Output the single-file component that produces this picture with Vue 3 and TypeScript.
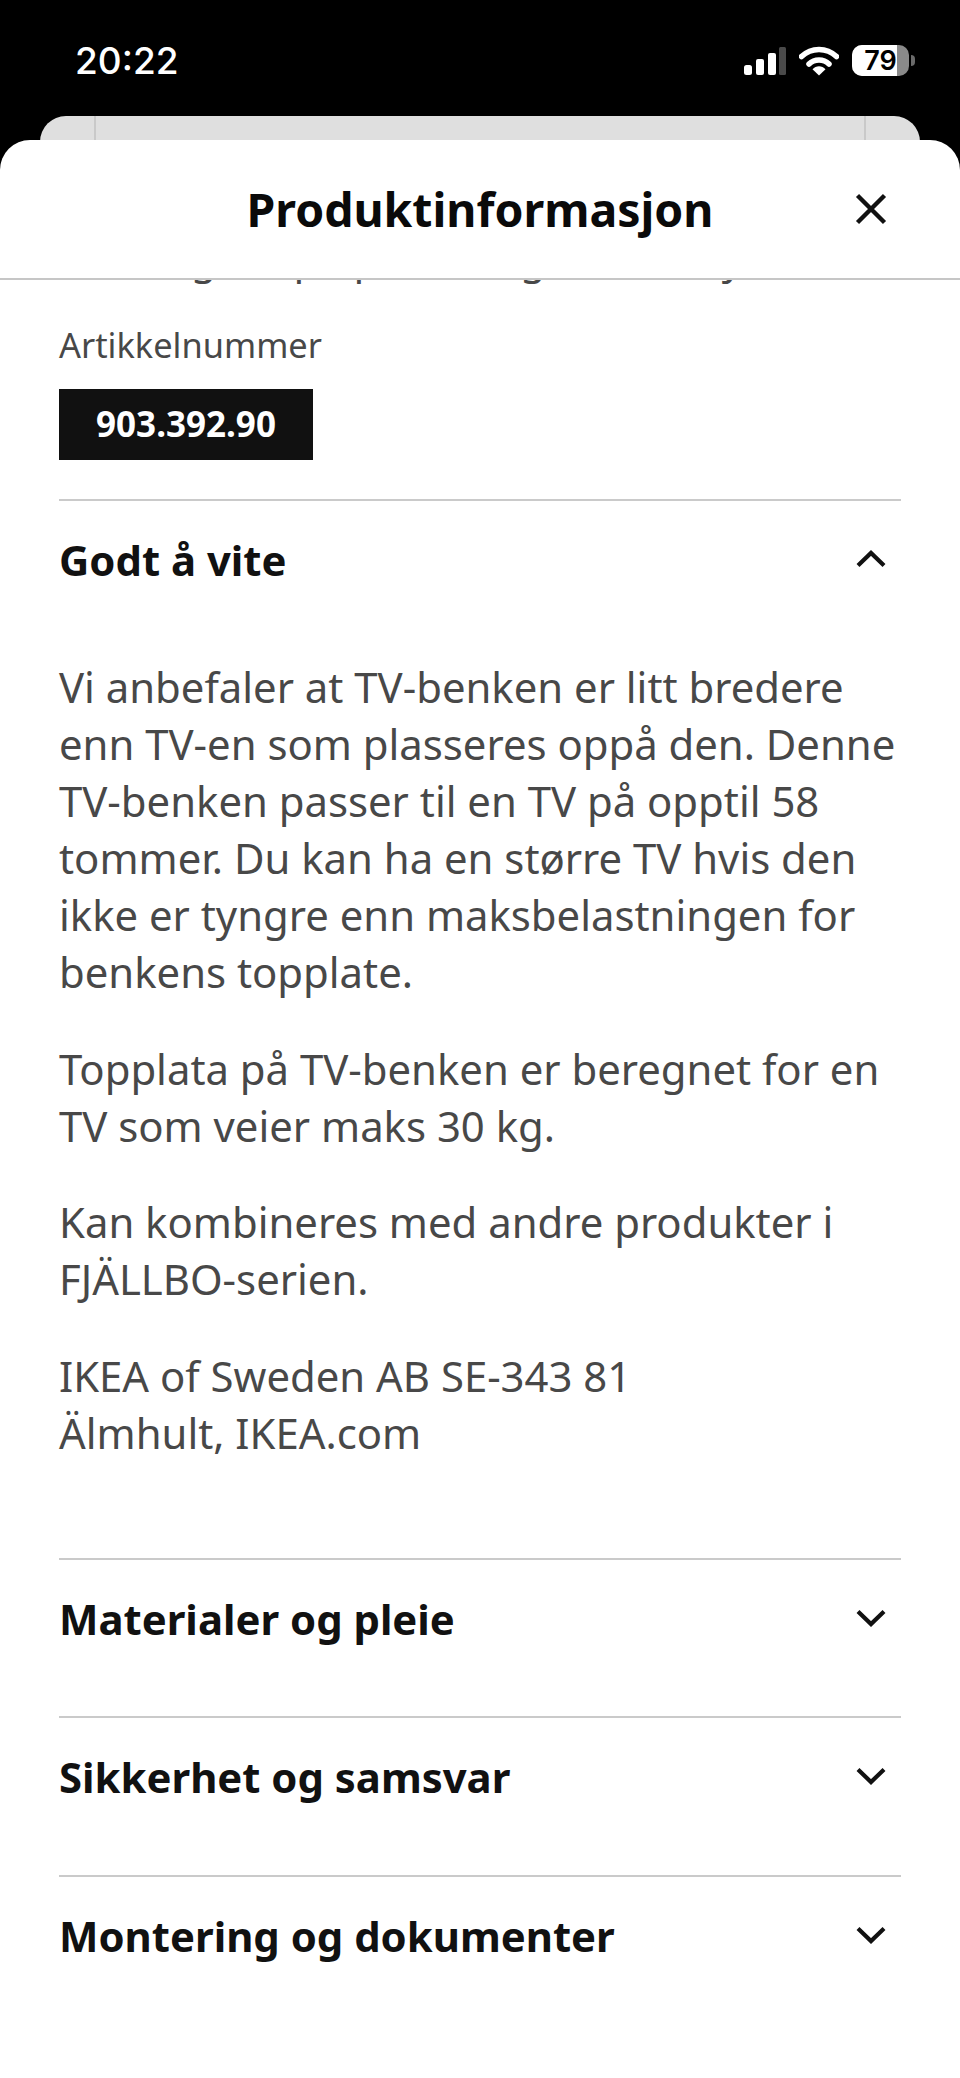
<template>
  <div class="phone">
    <!-- statuslinje -->
    <div class="status-bar">
      <span class="clock">20:22</span>
      <div class="status-icons">
        <svg class="signal" width="42" height="28" viewBox="0 0 42 28">
          <rect x="0" y="18" width="8" height="10" rx="2.5" fill="#fff" />
          <rect x="12" y="12" width="8" height="16" rx="2" fill="#fff" />
          <rect x="24" y="6" width="8" height="22" rx="2" fill="#fff" />
          <rect x="35" y="0" width="7" height="28" rx="1.5" fill="#4a4a4a" />
        </svg>
        <svg class="wifi" width="40" height="30" viewBox="0 0 40 30">
          <path d="M2.5 10.5C12.5 1 27.5 1 37.5 10.5" fill="none" stroke="#fff" stroke-width="5.5" stroke-linecap="round" />
          <path d="M10 18C15.5 12.5 24.5 12.5 30 18" fill="none" stroke="#fff" stroke-width="5.5" stroke-linecap="round" />
          <path d="M13.5 23.2C17 19.2 23 19.2 26.5 23.2L20 29.5Z" fill="#fff" />
        </svg>
        <div class="battery">
          <div class="battery-body">
            <div class="battery-fill" :style="{ width: batteryLevel + '%' }"></div>
            <span class="battery-text">{{ batteryText }}</span>
          </div>
          <div class="battery-nub"></div>
        </div>
      </div>
    </div>

    <!-- kortet bak arket -->
    <div class="back-card">
      <div class="back-card-inner"></div>
    </div>

    <div class="sheet">
      <div class="sheet-header">
        <h1 class="sheet-title">Produktinformasjon</h1>
        <svg class="close-icon" width="32" height="32" viewBox="0 0 32 32">
          <path d="M2.5 2.5L29.5 29.5M29.5 2.5L2.5 29.5" fill="none" stroke="#111" stroke-width="4.4" />
        </svg>
      </div>

      <div class="sheet-scroll">
        <p class="scrolled-line">Solid og tre på plass av gran med ytre</p>
        <div class="article-label">Artikkelnummer</div>
        <div class="article-number"><span>903.392.90</span></div>

        <section v-for="item in sections" :key="item.title" class="acc-item">
          <div class="acc-head">
            <span class="acc-title">{{ item.title }}</span>
            <svg class="chevron" :class="{ open: item.paragraphs.length > 0 }" width="30" height="18" viewBox="0 0 30 18">
              <path d="M2 2.5L15 15L28 2.5" fill="none" stroke="#111" stroke-width="4.2" />
            </svg>
          </div>
          <div v-if="item.paragraphs.length" class="acc-body">
            <p v-for="(text, i) in item.paragraphs" :key="i" v-html="text"></p>
          </div>
        </section>
      </div>
    </div>
  </div>
</template>

<script setup lang="ts">
interface Section {
  title: string
  paragraphs: string[]
}

const batteryLevel = 79
const batteryText = String(batteryLevel)

const sections: Section[] = [
  {
    title: 'Godt å vite',
    paragraphs: [
      'Vi anbefaler at TV-benken er litt bredere<br>enn TV-en som plasseres oppå den. Denne<br>TV-benken passer til en TV på opptil 58<br>tommer. Du kan ha en større TV hvis den<br>ikke er tyngre enn maksbelastningen for<br>benkens topplate.',
      'Topplata på TV-benken er beregnet for en<br>TV som veier maks 30 kg.',
      'Kan kombineres med andre produkter i<br>FJÄLLBO-serien.',
      'IKEA of Sweden AB SE-343 81<br>Älmhult, IKEA.com'
    ]
  },
  { title: 'Materialer og pleie', paragraphs: [] },
  { title: 'Sikkerhet og samsvar', paragraphs: [] },
  { title: 'Montering og dokumenter', paragraphs: [] }
]
</script>

<style>
html,
body {
  margin: 0;
  background: #000;
}
</style>

<style scoped>
.phone {
  width: 960px;
  height: 2078px;
  background: #000;
  overflow: hidden;
  font-family: "Noto Sans", "Open Sans", sans-serif;
  display: flex;
  flex-direction: column;
}

.status-bar {
  height: 116px;
  flex: none;
  box-sizing: border-box;
  padding: 45px 45px 0 75px;
  display: flex;
  justify-content: space-between;
  align-items: flex-start;
}

.clock {
  color: #fff;
  font-family: Inter, Roboto, sans-serif;
  font-size: 37px;
  font-weight: 500;
  line-height: 32px;
}

.status-icons {
  display: flex;
  align-items: flex-start;
  gap: 13px;
}

.signal {
  margin-top: 2px;
}

.wifi {
  margin-top: 1px;
}

.battery {
  display: flex;
  align-items: center;
  gap: 2px;
}

.battery-body {
  position: relative;
  width: 57px;
  height: 31px;
  border-radius: 10px;
  background: #8a8a8a;
  overflow: hidden;
  display: flex;
  align-items: center;
  justify-content: center;
}

.battery-fill {
  position: absolute;
  left: 0;
  top: 0;
  bottom: 0;
  background: #fff;
}

.battery-text {
  position: relative;
  color: #000;
  font-family: Inter, Roboto, sans-serif;
  font-size: 27px;
  font-weight: 600;
  line-height: 31px;
}

.battery-nub {
  width: 4px;
  height: 11px;
  background: #6a6a6a;
  border-radius: 0 4px 4px 0;
}

.back-card {
  height: 60px;
  flex: none;
  margin: 0 40px;
  background: #dfdfdf;
  border-radius: 26px 26px 0 0;
  padding: 0 54px;
}

.back-card-inner {
  height: 100%;
  border-left: 2px solid #c9c9c9;
  border-right: 2px solid #c9c9c9;
}

.sheet {
  flex: 1;
  min-height: 0;
  margin-top: -36px;
  background: #fff;
  border-radius: 30px 30px 0 0;
  position: relative;
  display: flex;
  flex-direction: column;
}

.sheet-header {
  height: 138px;
  flex: none;
  border-bottom: 2px solid #c6c6c6;
  position: relative;
  display: flex;
  align-items: center;
  justify-content: center;
}

.sheet-title {
  margin: 0;
  color: #0a0a0a;
  font-size: 46.4px;
  font-weight: 700;
  line-height: 60px;
}

.close-icon {
  position: absolute;
  left: 855px;
  top: 53px;
}

.sheet-scroll {
  flex: 1;
  min-height: 0;
  overflow: hidden;
  padding: 0 59px;
}

.scrolled-line {
  margin: -51px 0 0;
  color: #484848;
  font-size: 41.85px;
  line-height: 57px;
  white-space: nowrap;
}

.article-label {
  margin-top: 35px;
  color: #484848;
  font-size: 34.4px;
  line-height: 48px;
}

.article-number {
  margin-top: 20px;
  width: 254px;
  height: 71px;
  box-sizing: border-box;
  padding-bottom: 2px;
  background: #111;
  color: #fff;
  font-size: 35px;
  font-weight: 700;
  display: flex;
  align-items: center;
  justify-content: center;
}

.acc-item {
  border-top: 2px solid #cacaca;
  padding-bottom: 34.5px;
}

.article-number + .acc-item {
  margin-top: 39px;
}

.acc-head {
  height: 122px;
  display: flex;
  align-items: center;
  justify-content: space-between;
}

.acc-title {
  margin-top: -4px;
  color: #111;
  font-size: 41.85px;
  font-weight: 700;
  line-height: 52px;
}

.chevron {
  margin-right: 15px;
  margin-top: -6px;
}

.chevron.open {
  transform: rotate(180deg);
}

.acc-body {
  padding: 35px 0 62.5px;
}

.acc-body p {
  margin: 0 0 39.5px;
  color: #484848;
  font-size: 41.85px;
  line-height: 57px;
  white-space: nowrap;
}

.acc-body p:last-child {
  margin-bottom: 0;
}
</style>
